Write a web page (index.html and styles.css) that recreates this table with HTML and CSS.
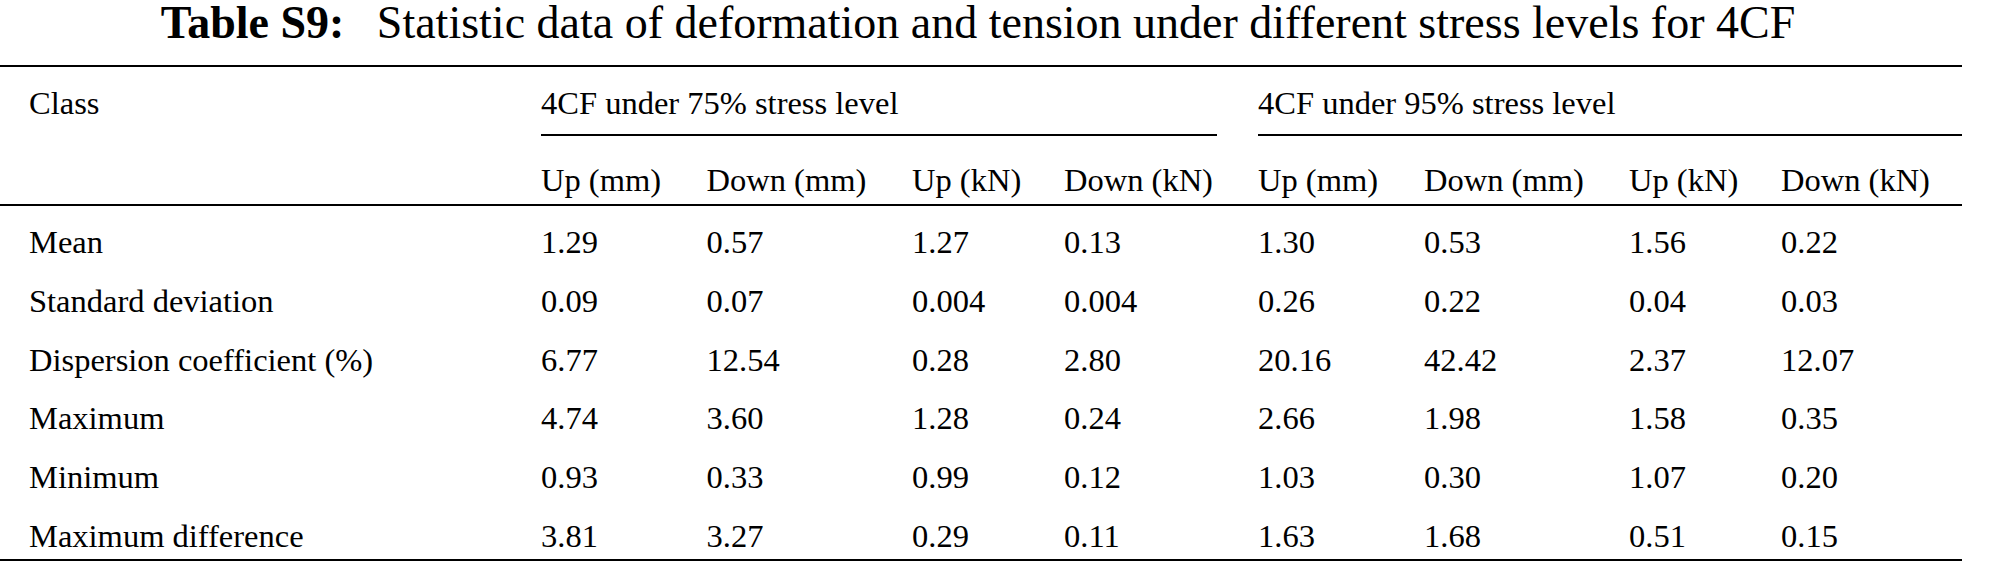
FILE: index.html
```html
<!DOCTYPE html>
<html lang="en">
<head>
<meta charset="utf-8">
<title>Table S9</title>
<link rel="stylesheet" href="styles.css">
</head>
<body>
<div class="sheet">
  <h1 class="caption"><span class="label">Table S9:</span> Statistic data of deformation and tension under different stress levels for 4CF</h1>
  <table class="data">
    <colgroup>
      <col class="w0"><col class="w1"><col class="w2"><col class="w3"><col class="w4">
      <col class="w5"><col class="w6"><col class="w7"><col class="w8">
    </colgroup>
    <thead>
      <tr class="head1">
        <th class="cls" rowspan="2">Class</th>
        <th class="span span-a" colspan="4"><div class="span-rule">4CF under 75% stress level</div></th>
        <th class="span span-b" colspan="4"><div class="span-rule">4CF under 95% stress level</div></th>
      </tr>
      <tr class="head2">
        <th>Up (mm)</th><th>Down (mm)</th><th>Up (kN)</th><th>Down (kN)</th>
        <th>Up (mm)</th><th>Down (mm)</th><th>Up (kN)</th><th>Down (kN)</th>
      </tr>
    </thead>
    <tbody>
      <tr><td class="lbl">Mean</td><td>1.29</td><td>0.57</td><td>1.27</td><td>0.13</td><td>1.30</td><td>0.53</td><td>1.56</td><td>0.22</td></tr>
      <tr><td class="lbl">Standard deviation</td><td>0.09</td><td>0.07</td><td>0.004</td><td>0.004</td><td>0.26</td><td>0.22</td><td>0.04</td><td>0.03</td></tr>
      <tr><td class="lbl">Dispersion coefficient (%)</td><td>6.77</td><td>12.54</td><td>0.28</td><td>2.80</td><td>20.16</td><td>42.42</td><td>2.37</td><td>12.07</td></tr>
      <tr><td class="lbl">Maximum</td><td>4.74</td><td>3.60</td><td>1.28</td><td>0.24</td><td>2.66</td><td>1.98</td><td>1.58</td><td>0.35</td></tr>
      <tr><td class="lbl">Minimum</td><td>0.93</td><td>0.33</td><td>0.99</td><td>0.12</td><td>1.03</td><td>0.30</td><td>1.07</td><td>0.20</td></tr>
      <tr class="last"><td class="lbl">Maximum difference</td><td>3.81</td><td>3.27</td><td>0.29</td><td>0.11</td><td>1.63</td><td>1.68</td><td>0.51</td><td>0.15</td></tr>
    </tbody>
  </table>
</div>
</body>
</html>
```

FILE: styles.css
```css
html, body {
  margin: 0;
  padding: 0;
  background: #ffffff;
}

body {
  font-family: "Liberation Serif", "Tinos", "Times New Roman", Times, "DejaVu Serif", serif;
  color: #000000;
}

.sheet {
  width: 1962px;
}

.caption {
  margin: 0;
  padding-right: 6px;
  font-family: inherit;
  font-size: 46px;
  line-height: 46px;
  font-weight: normal;
  text-align: center;
  white-space: nowrap;
}

.caption .label {
  font-weight: bold;
  margin-right: 21px;
}

.data {
  margin-top: 19px;
  width: 1962px;
  table-layout: fixed;
  border-collapse: separate;
  border-spacing: 0;
  font-family: inherit;
  font-size: 32.5px;
}

.w0 { width: 541px; }
.w1 { width: 165.5px; }
.w2 { width: 205.5px; }
.w3 { width: 152px; }
.w4 { width: 194px; }
.w5 { width: 166px; }
.w6 { width: 205px; }
.w7 { width: 152px; }
.w8 { width: 181px; }

.data th,
.data td {
  font-weight: normal;
  text-align: left;
  white-space: nowrap;
  padding: 0;
}

.head1 th {
  border-top: 2px solid #000;
  vertical-align: top;
}

.cls {
  padding: 16px 0 0 29px !important;
  line-height: 40px;
  border-bottom: 2px solid #000;
}

.span-rule {
  padding-top: 16px;
  padding-bottom: 11px;
  line-height: 40px;
  border-bottom: 2px solid #000;
}

.span-a {
  padding-right: 41px !important;
}

.head2 th {
  padding-top: 24px !important;
  padding-bottom: 4px !important;
  line-height: 40px;
  border-bottom: 2px solid #000;
}

.data td {
  padding-top: 14px;
  line-height: 44.8px;
}

.data td.lbl {
  padding-left: 29px;
}

.last td {
  border-bottom: 2px solid #000;
}
```
